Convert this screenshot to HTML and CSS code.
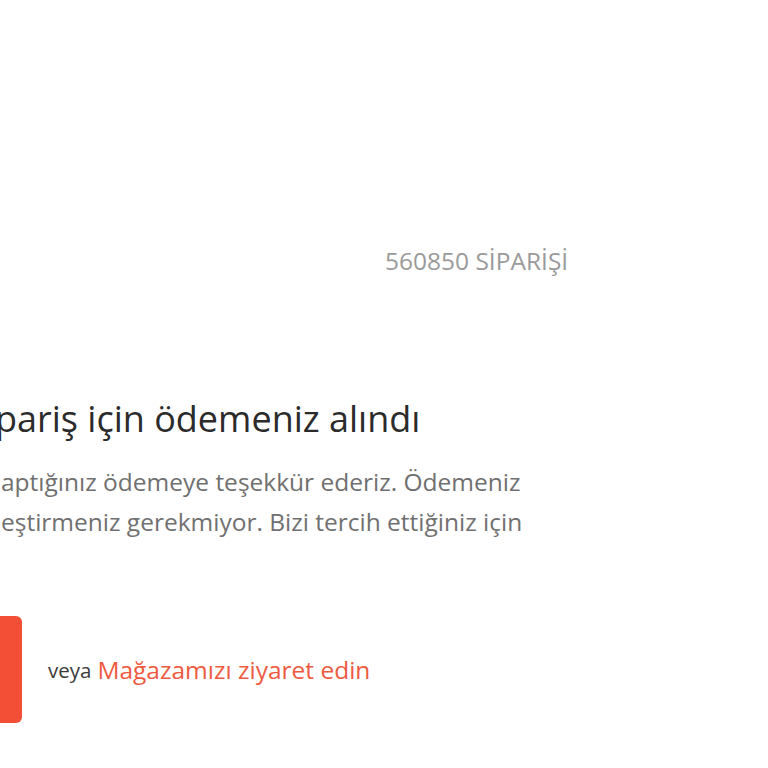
FILE: index.html
```html
<!DOCTYPE html>
<html lang="tr">
<head>
<meta charset="utf-8">
<title>Sipariş</title>
<link rel="stylesheet" href="styles.css">
</head>
<body>
<div class="page">
  <div class="order-row">
    <span class="order-no">560850 SİPARİŞİ</span>
  </div>
  <section class="content">
    <h1 class="title">pariş için ödemeniz alındı</h1>
    <p class="message">
      <span class="line">aptığınız ödemeye teşekkür ederiz. Ödemeniz</span>
      <span class="line">eştirmeniz gerekmiyor. Bizi tercih ettiğiniz için</span>
    </p>
    <div class="actions">
      <a class="btn" href="#"></a>
      <span class="or">veya</span>
      <a class="store-link" href="#">Mağazamızı ziyaret edin</a>
    </div>
  </section>
</div>
</body>
</html>
```
FILE: styles.css
```css
html, body {
  margin: 0;
  padding: 0;
  background: #ffffff;
  overflow: hidden;
}
body {
  width: 768px;
  height: 768px;
  font-family: "Open Sans", "Noto Sans", sans-serif;
}
.page {
  display: flex;
  flex-direction: column;
}
.order-row {
  display: flex;
  padding-top: 245px;
  padding-left: 385px;
  height: 32px;
}
.order-no {
  font-size: 24.5px;
  line-height: 32px;
  color: #9a9a9a;
  white-space: nowrap;
}
.content {
  display: flex;
  flex-direction: column;
  padding-top: 120px;
}
.title {
  margin: 0;
  font-size: 36px;
  font-weight: 400;
  line-height: 44px;
  color: #2b2b2b;
  text-indent: -5px;
  white-space: nowrap;
}
.message {
  margin: 21px 0 0 0;
  font-size: 24.5px;
  line-height: 40px;
  color: #707070;
  display: flex;
  flex-direction: column;
}
.line {
  white-space: nowrap;
  padding-left: 1px;
}
.actions {
  display: flex;
  align-items: center;
  margin-top: 74px;
}
.btn {
  display: block;
  width: 172px;
  height: 107px;
  margin-left: -150px;
  background: #f34e36;
  border-radius: 6px;
}
.or {
  margin-left: 26px;
  font-size: 20.5px;
  color: #3a3a3a;
}
.store-link {
  margin-left: 6px;
  font-size: 24.5px;
  color: #ee5a40;
  text-decoration: none;
  white-space: nowrap;
}
```
